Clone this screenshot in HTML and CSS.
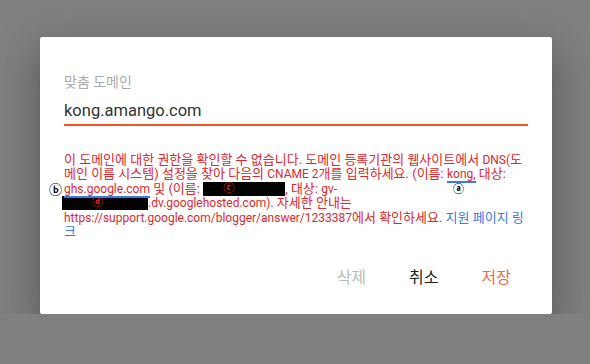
FILE: index.html
```html
<!DOCTYPE html>
<html lang="ko">
<head>
  <meta charset="UTF-8">
  <meta name="viewport" content="width=device-width, initial-scale=1.0">
  <title>맞춤 도메인</title>
  <link rel="stylesheet" href="styles.css">
</head>
<body>
  <!-- Custom domain dialog -->
  <div class="dialog">
    <div class="field">
      <div class="field-label">맞춤 도메인</div>
      <div class="field-input">kong.amango.com</div>
    </div>

    <!-- latin runs are kept at 12px, hangul runs at 13px -->
    <p class="error">이 도메인에 대한 권한을 확인할 수 없습니다. 도메인 등록기관의 웹사이트에서 <span class="en">DNS(</span>도메인 이름 시스템) 설정을 찾아 다음의 <span class="en">CNAME 2</span>개를 입력하세요. (이름: <span class="mark en">kong,<span class="tag tag-a">ⓐ</span></span> 대상: <span class="mark en"><span class="tag tag-b">ⓑ</span>ghs.google.com</span> 및 (이름: <span class="redact redact-c">ⓒ</span>, 대상: <span class="en">gv-</span><span class="nowrap"><span class="redact redact-d">ⓓ</span><span class="en">.dv.googlehosted.com).</span></span> 자세한 안내는 <span class="en">https://support.google.com/blogger/answer/1233387</span>에서 확인하세요. <a class="link" href="#">지원 페이지 링크</a></p>

    <div class="actions">
      <button class="btn btn-muted">삭제</button>
      <button class="btn">취소</button>
      <button class="btn btn-primary">저장</button>
    </div>
  </div>
</body>
</html>
```

FILE: styles.css
```css
body { margin: 0; padding-top: 37px; background: #808080; font-family: Roboto, "Noto Sans CJK KR", sans-serif; }
.dialog { width: 512px; height: 277px; margin-left: 40px; box-sizing: border-box; padding: 36px 24px 0; background: #fff; border-radius: 2px; display: flex; flex-direction: column; box-shadow: 0 11px 15px -7px rgba(0,0,0,0.2), 0 24px 38px 3px rgba(0,0,0,0.14), 0 9px 46px 8px rgba(0,0,0,0.12); }

.field-label { font-size: 14px; line-height: 18px; color: #ababab; }
.field-input { font-size: 16.5px; line-height: 22px; color: #333; margin-top: 9px; padding-bottom: 2px; border-bottom: 2px solid #f4511e; }

.error { margin: 27px 0 0; font-size: 13px; line-height: 14.4px; color: #e3262b; }
.en { font-size: 12px; }
.nowrap { white-space: nowrap; }
.link { color: #3b78e7; text-decoration: none; }
.mark { position: relative; border-bottom: 2px solid #3b78e7; }
.tag { position: absolute; font-size: 11px; line-height: 11px; color: #000; font-weight: bold; }
.tag-a { left: 6px; top: 17px; }
.tag-b { left: -15px; top: 1px; font-size: 13px; line-height: 13px; }
.redact { display: inline-block; height: 14px; vertical-align: top; background: #000; color: #ff1a1a; font-size: 11px; line-height: 14px; font-weight: bold; }
.redact-c { width: 82px; text-indent: 20px; }
.redact-d { width: 86px; text-indent: 30px; margin-left: -2px; }

.actions { margin-top: auto; padding: 0 17px 26px 0; display: flex; justify-content: flex-end; gap: 43px; }
.btn { background: none; border: 0; padding: 0; font-family: inherit; font-size: 16px; line-height: 20px; color: #222; cursor: pointer; }
.btn-muted { color: #bdbdbd; }
.btn-primary { color: #f7683a; }
```
